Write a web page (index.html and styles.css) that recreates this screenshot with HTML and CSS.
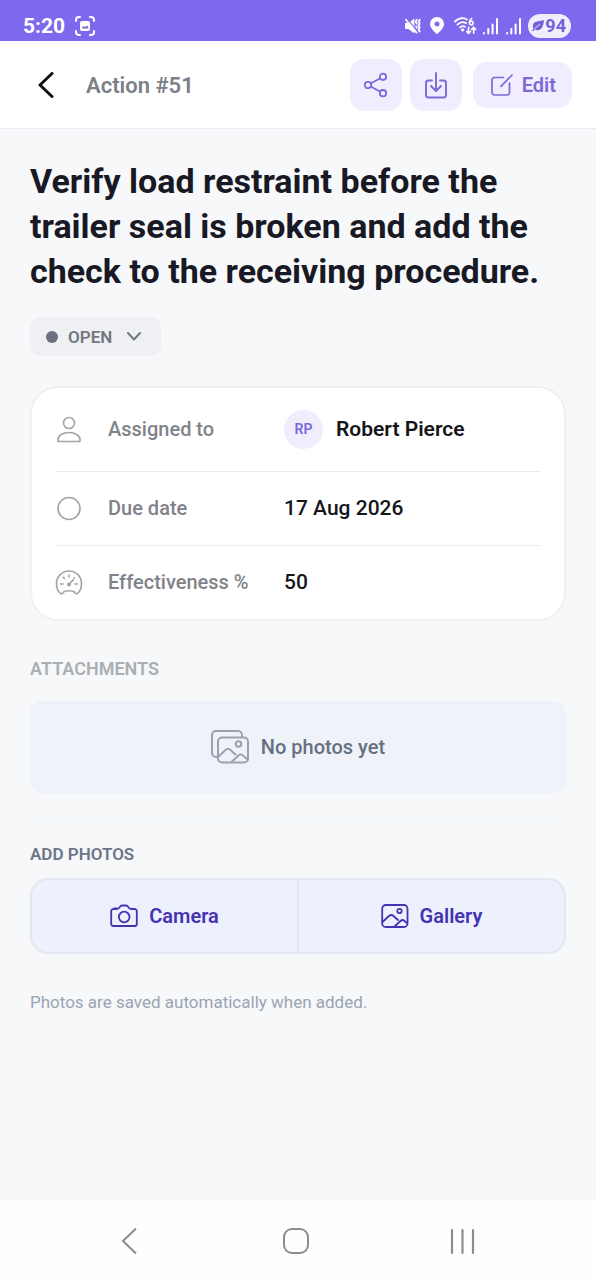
FILE: index.html
```html
<!DOCTYPE html>
<html lang="en">
<head>
<meta charset="utf-8">
<meta name="viewport" content="width=device-width, initial-scale=1">
<title>Action #51</title>
<link rel="stylesheet" href="styles.css">
</head>
<body>
<div class="screen">
  <div class="status-bar">
    <div class="status-group">
      <time class="clock">5:20</time>
      <svg width="20" height="20" viewBox="0 0 20 20" fill="none" stroke="currentColor" stroke-width="2" stroke-linecap="round">
        <path d="M1 5V4a3 3 0 0 1 3-3h1M15 1h1a3 3 0 0 1 3 3v1M19 15v1a3 3 0 0 1-3 3h-1M5 19H4a3 3 0 0 1-3-3v-1"/>
        <rect x="5" y="5" width="10" height="10" rx="2" fill="currentColor" stroke="none"/>
        <path d="M6.500 12.500l2-2.500 1.500 1 2.500-1.500 1 3z" fill="#7e69ee" stroke="none"/>
      </svg>
    </div>
    <div class="status-group status-right">
      <svg width="16" height="18" viewBox="0 0 18 18" fill="none" stroke="currentColor" stroke-width="2" stroke-linecap="round">
        <path d="M0 5.500h4l6.500-5v17l-6.500-5H0z" fill="currentColor" stroke="none"/>
        <path d="M3 1.500l11 13.500" stroke="#7e69ee" stroke-width="1.200"/>
        <path d="M1 2l12 14.500M13.200 2l-1.200 2.200 1.200 2.200M12.500 9.500l1 1.500M16.500 2l-1.200 2.200 1.200 2.200-1.200 2.200 1.200 2.200-1.200 2.200 1.200 2.200"/>
      </svg>
      <svg class="pin-icon" width="14" height="18" viewBox="0 0 14 18">
        <path fill="currentColor" fill-rule="evenodd" d="M7 0a7 7 0 0 0-7 7c0 4 4.500 7.500 7 10.500 2.500-3 7-6.500 7-10.500a7 7 0 0 0-7-7zm0 4.500a2.500 2.500 0 1 1 0 5 2.500 2.500 0 0 1 0-5z"/>
      </svg>
      <svg class="wifi-icon" width="23" height="18" viewBox="0 0 24 18" fill="none" stroke="currentColor" stroke-width="1.800" stroke-linecap="round">
        <path d="M1 4.500C5 .500 10 .300 13.500 2.200M3.600 7.600c3-2.800 6.400-3 9-1.600M6.200 10.500c1.600-1.500 3.600-1.700 5.300-.6"/>
        <circle cx="9" cy="13" r="1.700" fill="currentColor" stroke="none"/>
        <path d="M18.500 1c-1.600.8-2.300 2.300-2.300 4" stroke-width="1.600"/>
        <circle cx="18" cy="5.800" r="1.900" stroke-width="1.600"/>
        <path d="M15.200 10.500v6M13.200 14.700l2 2 2-2M20.500 16.500v-6M18.500 12.500l2-2 2 2" stroke-width="1.700"/>
      </svg>
      <svg width="15" height="18" viewBox="0 0 15 18" fill="none" stroke="currentColor" stroke-width="2" stroke-linecap="round">
        <path d="M1 16v.500M5.300 12v4.500M9.600 7.500v9M14 2v14.500"/>
      </svg>
      <svg width="15" height="18" viewBox="0 0 15 18" fill="none" stroke="currentColor" stroke-width="2" stroke-linecap="round">
        <path d="M1 16v.500M5.300 12v4.500M9.600 7.500v9M14 2v14.500"/>
      </svg>
      <span class="battery">
        <svg width="12" height="12" viewBox="0 0 12 12">
          <path fill="currentColor" d="M12 0C8 1.500 2 .500 1 5c-.3 1.500 0 2.500.4 3.400L0 10.500l1.200.8L2.500 9.500C8 12 11.500 8 12 0z"/>
          <path d="M2.500 9c2-2.300 3.500-3.400 5.500-4.500" stroke="#f0edfd" fill="none"/>
        </svg>
        <span>94</span>
      </span>
    </div>
  </div>

  <header class="app-bar">
    <button class="back" type="button" aria-label="Back">
      <svg width="16" height="26" viewBox="0 0 16 26" fill="none" stroke="currentColor" stroke-width="3" stroke-linecap="round" stroke-linejoin="round"><path d="M14 1.500L2 13l12 11.500"/></svg>
    </button>
    <span class="app-title">Action #51</span>
    <button class="tool" type="button" aria-label="Share">
      <svg width="26" height="26" viewBox="0 0 26 26" fill="none" stroke="currentColor" stroke-width="1.800">
        <circle cx="5" cy="13" r="3.200"/><circle cx="20" cy="4.800" r="3.200"/><circle cx="20" cy="21.200" r="3.200"/><path d="M7.800 11.500l9.400-5.200M7.800 14.500l9.400 5.200"/>
      </svg>
    </button>
    <button class="tool" type="button" aria-label="Download">
      <svg width="26" height="28" viewBox="0 0 26 28" fill="none" stroke="currentColor" stroke-width="1.900" stroke-linecap="round" stroke-linejoin="round">
        <path d="M9 9.500H5.500a2.500 2.500 0 0 0-2.500 2.500v12a2.500 2.500 0 0 0 2.500 2.500h15A2.500 2.500 0 0 0 23 24V12a2.500 2.500 0 0 0-2.500-2.500H17M13 2v17.500M8 15l5 5 5-5"/>
      </svg>
    </button>
    <button class="tool edit" type="button">
      <svg width="22" height="22" viewBox="0 0 22 22" fill="none" stroke="currentColor" stroke-width="1.700" stroke-linecap="round" stroke-linejoin="round">
        <path d="M12.500 3.500h-9A2.500 2.500 0 0 0 1 6v12.500A2.500 2.500 0 0 0 3.500 21H16a2.500 2.500 0 0 0 2.500-2.500V9"/><path d="M10 12.300L21 1"/>
      </svg>
      <span>Edit</span>
    </button>
  </header>

  <main class="content">
    <h1 class="title">Verify load restraint before the trailer seal is broken and add the check to the receiving procedure.</h1>

    <div class="status-chip">
      <span class="dot"></span>
      <select class="status-select" aria-label="Status"><option>OPEN</option></select>
      <svg width="14" height="9" viewBox="0 0 14 9" fill="none" stroke="currentColor" stroke-width="2" stroke-linecap="round" stroke-linejoin="round"><path d="M1 1l6 6.500L13 1"/></svg>
    </div>

    <dl class="card">
      <div class="row">
        <dt class="label">
          <svg width="28" height="28" viewBox="0 0 28 28" fill="none" stroke="currentColor" stroke-width="1.600" stroke-linejoin="round"><circle cx="14" cy="7" r="5.500"/><path d="M3 25.500v-2c0-4 5-7 11-7s11 3 11 7v2z"/></svg>
          <span>Assigned to</span>
        </dt>
        <dd class="value person"><span class="avatar">RP</span><span>Robert Pierce</span></dd>
      </div>
      <div class="row">
        <dt class="label">
          <svg width="28" height="28" viewBox="0 0 28 28" fill="none" stroke="currentColor" stroke-width="1.600"><circle cx="14" cy="13.500" r="11"/></svg>
          <span>Due date</span>
        </dt>
        <dd class="value">17 Aug 2026</dd>
      </div>
      <div class="row">
        <dt class="label">
          <svg width="28" height="28" viewBox="0 0 28 28" fill="none" stroke="currentColor" stroke-width="1.600" stroke-linecap="round" stroke-linejoin="round">
            <path d="M5.500 24.500C3 22.500 1.500 18.500 1.500 14.500a12.500 12.500 0 0 1 25 0c0 4-1.500 8-4 10-1.200.6-2.200 0-2.800-1.200-1.700-2-9.700-2-11.400 0-.6 1.200-1.600 1.800-2.800 1.200z"/>
            <path d="M14 6v2M8.300 8.300l1.200 1.200M19.500 8.500l-.5.500M5.500 15h2.500M20 15h2.500M14.500 15l4-4.500"/><circle cx="14" cy="15.500" r="1.200" fill="currentColor"/>
          </svg>
          <span>Effectiveness %</span>
        </dt>
        <dd class="value">50</dd>
      </div>
    </dl>

    <section class="attachments">
      <h2 class="section-title muted">ATTACHMENTS</h2>
      <div class="empty">
        <svg width="38" height="34" viewBox="0 0 38 34" fill="none" stroke="currentColor" stroke-width="2" stroke-linecap="round" stroke-linejoin="round">
          <path d="M7 27H5a4 4 0 0 1-4-4V5a4 4 0 0 1 4-4h22a4 4 0 0 1 4 4v2"/>
          <rect x="7" y="7.500" width="30" height="25" rx="4"/><circle cx="27.500" cy="14" r="2.800"/>
          <path d="M7.500 26.500l7-6.500c2-1.800 3.500-1.500 5 0l5 4.500M20.500 32l7-6.500c1.500-1.400 3-1.400 4.500 0l4.500 4"/>
        </svg>
        <span>No photos yet</span>
      </div>
    </section>

    <section class="add-photos">
      <h2 class="section-title small">ADD PHOTOS</h2>
      <div class="sources">
        <button class="source" type="button">
          <svg width="28" height="24" viewBox="0 0 28 24" fill="none" stroke="currentColor" stroke-width="1.800" stroke-linejoin="round" stroke-linecap="round">
            <path d="M3.500 5H7c1.300 0 2-.7 2.700-1.900C10.500 1.700 11 1.500 12 1.500h4c1 0 1.600.2 2.400 1.600C19 4.300 19.800 5 21 5h3.500A2.300 2.300 0 0 1 26.800 7.300V20a2 2 0 0 1-2 2H3.200a2 2 0 0 1-2-2V7.300A2.300 2.300 0 0 1 3.500 5zM4.300 4.300h2.500"/>
            <circle cx="14.200" cy="13" r="5.300"/>
          </svg>
          <span>Camera</span>
        </button>
        <button class="source" type="button">
          <svg width="28" height="24" viewBox="0 0 28 24" fill="none" stroke="currentColor" stroke-width="1.800" stroke-linejoin="round" stroke-linecap="round">
            <rect x="1.200" y="1" width="25.300" height="22" rx="3.500"/><circle cx="18.500" cy="7" r="2.200"/>
            <path d="M2 17.500l6-5.500c1.700-1.500 3-1.500 4.500 0l4.500 4M13.500 22.500l6-5.500c1.500-1.400 2.500-1.400 4 0l2.500 2"/>
          </svg>
          <span>Gallery</span>
        </button>
      </div>
    </section>

    <p class="note">Photos are saved automatically when added.</p>
  </main>

  <nav class="system-nav" aria-label="System">
    <button class="nav-button" type="button" aria-label="Back">
      <svg width="28" height="28" viewBox="0 0 28 28" fill="none" stroke="currentColor" stroke-width="2"><path d="M21 1.500L8 14l13 12.500"/></svg>
    </button>
    <button class="nav-button" type="button" aria-label="Home">
      <svg width="28" height="28" viewBox="0 0 28 28" fill="none" stroke="currentColor" stroke-width="2"><rect x="2" y="2" width="24" height="24" rx="8"/></svg>
    </button>
    <button class="nav-button" type="button" aria-label="Recent apps">
      <svg width="28" height="28" viewBox="0 0 28 28" fill="none" stroke="currentColor" stroke-width="2.200" stroke-linecap="round"><path d="M3 3v23M13.500 3v23M24 3v23"/></svg>
    </button>
  </nav>
</div>
</body>
</html>
```

FILE: styles.css
```css
* {
  box-sizing: border-box;
}

body {
  margin: 0;
  font-family: Roboto, "Liberation Sans", sans-serif;
  color: #181924;
  background: #f6f8fa;
}

button {
  margin: 0;
  padding: 0;
  border: 0;
  background: none;
  color: inherit;
  font: inherit;
  cursor: pointer;
}

svg {
  display: block;
  flex: none;
}

.screen {
  display: flex;
  flex-direction: column;
  min-height: 100vh;
}

/* Device status bar */
.status-bar {
  display: flex;
  justify-content: space-between;
  align-items: flex-end;
  height: 41px;
  padding: 0 25px 2px 23px;
  background: #7e69ee;
  color: #ffffff;
}

.status-group {
  display: flex;
  align-items: center;
  gap: 10px;
  height: 26px;
}

.status-right {
  gap: 8px;
}

.pin-icon {
  margin-left: 1px;
}

.wifi-icon {
  margin-left: 2px;
  margin-right: -2px;
}

.clock {
  font-size: 21px;
  line-height: 26px;
  font-weight: 700;
}

.battery {
  display: flex;
  align-items: center;
  gap: 1px;
  height: 24px;
  margin-left: -1px;
  padding: 0 5px 0 4px;
  border-radius: 12px;
  background: #f0edfd;
  color: #7461d8;
  font-size: 18px;
  line-height: 24px;
  font-weight: 700;
}

/* App bar */
.app-bar {
  display: flex;
  align-items: center;
  gap: 8px;
  height: 88px;
  padding: 0 24px 0 30px;
  border-bottom: 1px solid #e9ebee;
  background: #ffffff;
}

.back {
  display: flex;
  align-items: center;
  justify-content: center;
  width: 32px;
  height: 52px;
  color: #101014;
}

.app-title {
  flex: 1;
  padding: 2px 0 0 16px;
  color: #7c8088;
  font-size: 22px;
  line-height: 30px;
  font-weight: 600;
}

.tool {
  display: flex;
  align-items: center;
  justify-content: center;
  width: 52px;
  height: 52px;
  border-radius: 14px;
  background: #f1edfe;
  color: #7c68d8;
}

.edit {
  gap: 9px;
  width: auto;
  height: 46px;
  margin-left: 3px;
  padding: 0 16px 0 18px;
  font-size: 20px;
  font-weight: 600;
}

/* Content */
.content {
  flex: 1;
  padding: 30px;
}

.title {
  margin: 0;
  font-size: 34px;
  line-height: 45px;
  font-weight: 700;
}

.status-chip {
  display: inline-flex;
  align-items: center;
  gap: 10px;
  height: 39px;
  margin-top: 23px;
  padding: 0 20px 0 16px;
  border-radius: 10px;
  background: #eef0f4;
  color: #74777f;
}

.dot {
  width: 12px;
  height: 12px;
  border-radius: 50%;
  background: #6d7080;
}

.status-select {
  appearance: none;
  margin: 0 4px 0 0;
  padding: 0;
  border: 0;
  background: none;
  color: inherit;
  font-family: inherit;
  font-size: 17px;
  font-weight: 600;
}

.card {
  margin: 30px 0 0;
  padding: 0 23px;
  border: 2px solid #eef0f2;
  border-radius: 28px;
  background: #ffffff;
}

.row {
  display: grid;
  grid-template-columns: 229px 1fr;
  align-items: center;
  padding: 22px 0;
}

.row + .row {
  border-top: 1px solid #e9ebed;
}

.label,
.value {
  display: flex;
  align-items: center;
  margin: 0;
  line-height: 29px;
}

.label {
  gap: 25px;
  color: #7f8389;
  font-size: 20px;
  font-weight: 500;
}

.label svg {
  color: #a2a4a7;
}

.value {
  color: #15161a;
  font-size: 21px;
  font-weight: 500;
}

.person {
  gap: 13px;
  font-weight: 600;
}

.avatar {
  width: 39px;
  height: 39px;
  border-radius: 50%;
  background: #f1edfe;
  color: #7967e0;
  font-size: 14px;
  line-height: 39px;
  text-align: center;
}

.section-title {
  margin: 0;
  color: #6d7587;
  font-size: 18px;
  line-height: 24px;
  font-weight: 600;
}

.small {
  font-size: 17px;
}

.muted {
  color: #abaeb2;
}

.attachments {
  margin-top: 36px;
}

.empty {
  display: flex;
  align-items: center;
  justify-content: center;
  gap: 12px;
  height: 92px;
  margin-top: 20px;
  border-radius: 12px;
  background: #eff3f9;
  color: #9aa1b0;
}

.empty span {
  color: #667081;
  font-size: 20px;
  line-height: 30px;
  font-weight: 500;
}

.add-photos {
  margin-top: 29px;
  padding-top: 19px;
  border-top: 1px solid #f2f5f9;
}

.sources {
  display: flex;
  margin-top: 12px;
  border: 2px solid #e4e7f0;
  border-radius: 18px;
  background: #edf1fe;
}

.source {
  display: flex;
  flex: 1;
  align-items: center;
  justify-content: center;
  gap: 11px;
  height: 72px;
  color: #4533b2;
  font-size: 20px;
  font-weight: 600;
}

.source + .source {
  border-left: 2px solid #e4e7f0;
}

.note {
  margin: 36px 0 0;
  color: #9aa4b2;
  font-size: 17px;
  line-height: 24px;
  font-weight: 400;
}

/* System navigation */
.system-nav {
  display: flex;
  align-items: center;
  height: 80px;
  padding: 2px 50px 0 45px;
  background: #fefefe;
  color: #8d8d8d;
}

.nav-button {
  display: flex;
  flex: 1;
  align-items: center;
  justify-content: center;
  height: 56px;
}
```
